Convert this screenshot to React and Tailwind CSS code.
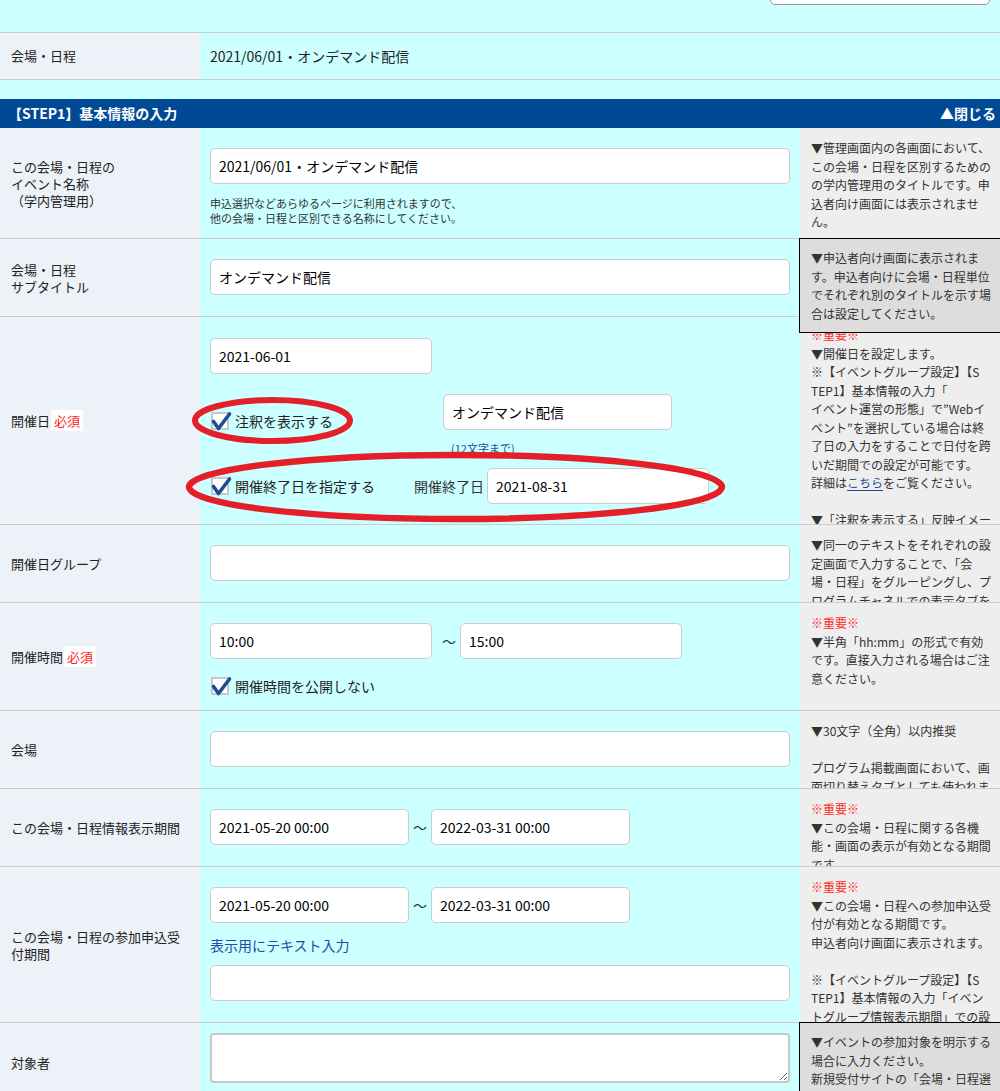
import React from "react";

const Field = ({ value = "", className = "" }) => (
  <input
    type="text"
    readOnly
    value={value}
    className={`h-[36px] rounded-[5px] border border-[#cccccc] bg-white px-[8px] text-[14px] text-black outline-none ${className}`}
  />
);

const Check = ({ label, className = "" }) => (
  <label className={`flex items-center ${className}`}>
    <span className="relative ml-[1px] inline-block h-[18px] w-[18px] shrink-0 border-2 border-[#c8c8c8] bg-white">
      <svg
        className="absolute left-[-2px] top-[-2px] overflow-visible"
        width="22"
        height="20"
        viewBox="0 0 22 20"
      >
        <path
          d="M2.5 9.5 L7.5 16.5 L18.5 2"
          fill="none"
          stroke="#1c4d95"
          strokeWidth="3.6"
          strokeLinecap="round"
          strokeLinejoin="round"
        />
      </svg>
    </span>
    <span className="ml-[6px] text-[14px] leading-[20px] text-[#222]">{label}</span>
  </label>
);

const Required = () => (
  <span className="ml-[1px] inline-flex h-[21px] items-center bg-white px-[3px] text-[13px] text-[#ff2020]">
    必須
  </span>
);

const Lines = ({ lines }) =>
  lines.map((l, i) => {
    if (l === "") return <div key={i} className="h-[18.5px]" />;
    if (l === "※重要※")
      return (
        <div key={i} className="text-[#ff2a2a]">
          ※重要※
        </div>
      );
    return <div key={i}>{l}</div>;
  });

const Help = ({ children }) => (
  <div className="w-[200px] shrink-0 overflow-hidden whitespace-nowrap bg-[#eeeeee] pl-[11px] pr-[9px] pt-[11px] text-[12px] leading-[18.5px] text-[#333]">
    {children}
  </div>
);

const DarkHelp = ({ children }) => (
  <div className="relative w-[200px] shrink-0 bg-[#eeeeee]">
    <div className="absolute left-[-1px] right-[-1px] top-[-1px] z-10 whitespace-nowrap border border-black bg-[#dddddd] pb-[9px] pl-[11px] pr-[9px] pt-[10px] text-[12px] leading-[18.5px] text-[#333]">
      {children}
    </div>
  </div>
);

const Row = ({ h, label, help, children, extra }) => (
  <div className={`relative flex border-b border-[#cccccc] ${h}`}>
    <div className="flex w-[200px] shrink-0 items-center bg-[#edf1f8] pl-[11px] pr-[9px] text-[13px] leading-[17px] text-[#222]">
      <div>{label}</div>
    </div>
    <div className="flex-1 bg-[#ccffff] px-[10px] pt-[20px]">{children}</div>
    {help}
    {extra}
  </div>
);

export default function App() {
  return (
    <div className="min-h-[1091px] w-[1000px] bg-[#ccffff] font-['Noto_Sans_CJK_JP','Noto_Sans',sans-serif]">
      {/* top strip with search box */}
      <div className="flex h-[32px] justify-end overflow-hidden pr-[10px]">
        <div className="mt-[-31px] h-[36px] w-[220px] rounded-[5px] border border-[#999999] bg-white" />
      </div>

      <div className="flex h-[48px] border-y border-[#cccccc]">
        <div className="flex w-[200px] items-center bg-[#edf1f8] pl-[11px] text-[13px] text-[#222]">
          会場・日程
        </div>
        <div className="flex flex-1 items-center pl-[10px] text-[14px] text-[#222]">
          2021/06/01・オンデマンド配信
        </div>
      </div>

      <div className="h-[19px]" />

      <div className="flex h-[29px] items-center justify-between bg-[#004994] pl-[8px] pr-[4px] text-[14px] font-bold text-white">
        <span>【STEP1】基本情報の入力</span>
        <span>▲閉じる</span>
      </div>

      <Row
        h="h-[111px]"
        label={
          <>
            この会場・日程の
            <br />
            イベント名称
            <br />
            （学内管理用）
          </>
        }
        help={
          <Help>
            <Lines
              lines={[
                "▼管理画面内の各画面において、",
                "この会場・日程を区別するための",
                "の学内管理用のタイトルです。申",
                "込者向け画面には表示されませ",
                "ん。",
              ]}
            />
          </Help>
        }
      >
        <Field className="w-full" value="2021/06/01・オンデマンド配信" />
        <div className="mt-[12px] text-[11px] leading-[15px] text-[#333]">
          申込選択などあらゆるページに利用されますので、
          <br />
          他の会場・日程と区別できる名称にしてください。
        </div>
      </Row>

      <Row
        h="h-[78px]"
        label={
          <>
            会場・日程
            <br />
            サブタイトル
          </>
        }
        help={
          <DarkHelp>
            <Lines
              lines={[
                "▼申込者向け画面に表示されま",
                "す。申込者向けに会場・日程単位",
                "でそれぞれ別のタイトルを示す場",
                "合は設定してください。",
              ]}
            />
          </DarkHelp>
        }
      >
        <Field className="w-full" value="オンデマンド配信" />
      </Row>

      <Row
        h="h-[208px]"
        label={
          <span className="flex items-center">
            開催日
            <Required />
          </span>
        }
        help={
          <Help>
            <div className="mt-[-2px]">
              <Lines lines={["※重要※", "▼開催日を設定します。", "※【イベントグループ設定】【S", "TEP1】基本情報の入力「", "イベント運営の形態」で”Webイ", "ベント”を選択している場合は終", "了日の入力をすることで日付を跨", "いだ期間での設定が可能です。"]} />
              <div>
                詳細は
                <span className="text-[#1a4f9c] underline underline-offset-2">こちら</span>
                をご覧ください。
              </div>
              <div className="h-[18.5px]" />
              <div>▼「注釈を表示する」反映イメー</div>
            </div>
          </Help>
        }
        extra={
          <svg
            className="pointer-events-none absolute left-0 top-0 z-20 overflow-visible"
            width="1000"
            height="207"
          >
            <ellipse cx="272.5" cy="103.5" rx="77.5" ry="20.5" fill="none" stroke="#e51f28" strokeWidth="6" />
            <ellipse cx="455.5" cy="170" rx="266.5" ry="32" fill="none" stroke="#e51f28" strokeWidth="6.5" />
          </svg>
        }
      >
        <div className="pt-[1px]">
          <Field className="w-[222px]" value="2021-06-01" />
        </div>
        <div className="mt-[20px] flex items-start">
          <div className="w-[233px] pt-[17px]">
            <Check label="注釈を表示する" />
          </div>
          <div>
            <Field className="w-[229px]" value="オンデマンド配信" />
            <div className="mt-[11px] pl-[8px] text-[11px] leading-[14px] text-[#1a4f9c]">
              (12文字まで)
            </div>
          </div>
        </div>
        <div className="mt-[13px] flex items-center">
          <Check className="w-[204px]" label="開催終了日を指定する" />
          <span className="text-[14px] text-[#333]">開催終了日</span>
          <Field className="ml-[3px] w-[222px]" value="2021-08-31" />
        </div>
      </Row>

      <Row
        h="h-[78px]"
        label="開催日グループ"
        help={
          <Help>
            <Lines
              lines={[
                "▼同一のテキストをそれぞれの設",
                "定画面で入力することで、「会",
                "場・日程」をグルーピングし、プ",
                "ログラムチャネルでの表示タブを",
              ]}
            />
          </Help>
        }
      >
        <Field className="w-full" />
      </Row>

      <Row
        h="h-[108px]"
        label={
          <span className="flex items-center">
            開催時間
            <Required />
          </span>
        }
        help={
          <Help>
            <Lines
              lines={[
                "※重要※",
                "▼半角「hh:mm」の形式で有効",
                "です。直接入力される場合はご注",
                "意ください。",
              ]}
            />
          </Help>
        }
      >
        <div className="flex items-center">
          <Field className="w-[222px]" value="10:00" />
          <span className="ml-[10px] mr-[4px] text-[14px] text-[#333]">〜</span>
          <Field className="w-[222px]" value="15:00" />
        </div>
        <Check className="mt-[17px]" label="開催時間を公開しない" />
      </Row>

      <Row
        h="h-[78px]"
        label="会場"
        help={
          <Help>
            <Lines
              lines={[
                "▼30文字（全角）以内推奨",
                "",
                "プログラム掲載画面において、画",
                "面切り替えタブとしても使われま",
              ]}
            />
          </Help>
        }
      >
        <Field className="w-full" />
      </Row>

      <Row
        h="h-[78px]"
        label="この会場・日程情報表示期間"
        help={
          <Help>
            <Lines
              lines={[
                "※重要※",
                "▼この会場・日程に関する各機",
                "能・画面の表示が有効となる期間",
                "です。",
              ]}
            />
          </Help>
        }
      >
        <div className="flex items-center">
          <Field className="w-[199px]" value="2021-05-20 00:00" />
          <span className="w-[22px] text-center text-[14px] text-[#333]">〜</span>
          <Field className="w-[199px]" value="2022-03-31 00:00" />
        </div>
      </Row>

      <Row
        h="h-[156px]"
        label="この会場・日程の参加申込受付期間"
        help={
          <Help>
            <Lines
              lines={[
                "※重要※",
                "▼この会場・日程への参加申込受",
                "付が有効となる期間です。",
                "申込者向け画面に表示されます。",
                "",
                "※【イベントグループ設定】【S",
                "TEP1】基本情報の入力「イベン",
                "トグループ情報表示期間」での設",
              ]}
            />
          </Help>
        }
      >
        <div className="flex items-center">
          <Field className="w-[199px]" value="2021-05-20 00:00" />
          <span className="w-[22px] text-center text-[14px] text-[#333]">〜</span>
          <Field className="w-[199px]" value="2022-03-31 00:00" />
        </div>
        <div className="mt-[12px] text-[14px] leading-[20px] text-[#1a4f9c]">表示用にテキスト入力</div>
        <Field className="mt-[10px] w-full" />
      </Row>

      <Row
        h="h-[80px]"
        label="対象者"
        help={
          <DarkHelp>
            <Lines
              lines={[
                "▼イベントの参加対象を明示する",
                "場合に入力ください。",
                "新規受付サイトの「会場・日程選",
                "択」画面に表示されます。",
              ]}
            />
          </DarkHelp>
        }
      >
        <textarea
          readOnly
          className="mt-[-10px] block h-[50px] w-full rounded-[4px] border-2 border-[#c8c8c8] bg-white px-[8px] text-[14px] outline-none"
        />
      </Row>
    </div>
  );
}
